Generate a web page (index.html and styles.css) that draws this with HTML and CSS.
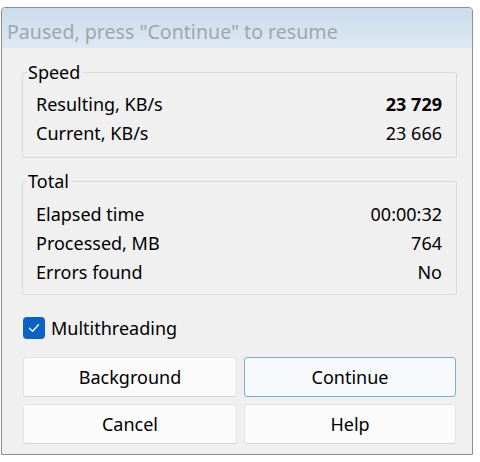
FILE: index.html
```html
<!DOCTYPE html>
<html>
<head>
<meta charset="utf-8">
<link rel="stylesheet" href="styles.css">
</head>
<body>
<div class="window">
  <div class="titlebar">Paused, press "Continue" to resume</div>
  <div class="content">
    <fieldset class="group group-speed">
      <legend>Speed</legend>
      <div class="row"><span>Resulting, KB/s</span><span class="strong">23 729</span></div>
      <div class="row"><span>Current, KB/s</span><span>23 666</span></div>
    </fieldset>
    <fieldset class="group group-total">
      <legend>Total</legend>
      <div class="row"><span>Elapsed time</span><span>00:00:32</span></div>
      <div class="row"><span>Processed, MB</span><span>764</span></div>
      <div class="row"><span>Errors found</span><span>No</span></div>
    </fieldset>
    <label class="check">
      <span class="box"><svg width="14" height="14" viewBox="0 0 14 14"><path d="M2.5 7.2 L5.6 10.2 L11.5 3.8" fill="none" stroke="#fff" stroke-width="1.3" stroke-linecap="round" stroke-linejoin="round"/></svg></span>
      <span>Multithreading</span>
    </label>
    <div class="buttons">
      <button class="btn">Background</button>
      <button class="btn btn-default">Continue</button>
      <button class="btn">Cancel</button>
      <button class="btn">Help</button>
    </div>
  </div>
</div>
</body>
</html>
```
FILE: styles.css
```css
html, body {
  margin: 0;
  padding: 0;
  background: #ffffff;
}
body {
  font-family: "Noto Sans", "Open Sans", sans-serif;
  font-size: 18px;
  color: #000;
}
.window {
  margin: 7px 0 0 1px;
  width: 470px;
  height: 446px;
  border: 1px solid #8e8e8e;
  border-radius: 4px 4px 0 0;
  background: #f0f0f0;
  display: flex;
  flex-direction: column;
  overflow: hidden;
}
.titlebar {
  height: 40px;
  box-sizing: border-box;
  padding: 12px 0 0 5px;
  background: linear-gradient(#cbdceb, #dde8f2);
  color: #a0a6ac;
  font-size: 19.6px;
  line-height: 24px;
  white-space: nowrap;
}
.content {
  flex: 1;
  padding: 14px 15px 0 20px;
}
.group {
  margin: 0;
  padding: 0 14px 10px 13px;
  border: 1px solid #dcdcdc;
  border-radius: 2px;
  min-width: 0;
  box-sizing: border-box;
}
.group legend {
  padding: 0 2px 0 1px;
  margin-left: -9px;
  line-height: 20px;
}
.group-speed {
  padding-top: 8px;
  height: 96px;
}
.group-total {
  margin-top: 13px;
  padding-top: 9px;
  height: 124px;
}
.row {
  display: flex;
  justify-content: space-between;
  height: 29px;
  line-height: 29px;
}
.strong {
  font-weight: 700;
}
.check {
  display: flex;
  align-items: center;
  gap: 6px;
  margin: 22px 0 0 1px;
  height: 22px;
}
.box {
  width: 22px;
  height: 22px;
  border-radius: 4px;
  background: #0b62c6;
  display: flex;
  align-items: center;
  justify-content: center;
}
.buttons {
  display: grid;
  grid-template-columns: 214px 212px;
  grid-auto-rows: 40px;
  column-gap: 7px;
  row-gap: 7px;
  margin: 18px 0 0 1px;
}
.btn {
  height: 40px;
  font-family: inherit;
  font-size: 18px;
  color: #000;
  background: #fbfbfb;
  border: 1px solid #e3e3e3;
  border-bottom-color: #d4d4d4;
  border-radius: 3px;
  padding: 0;
}
.btn-default {
  background: #f6fafd;
  border: 1px solid #7eaad6;
}
```
